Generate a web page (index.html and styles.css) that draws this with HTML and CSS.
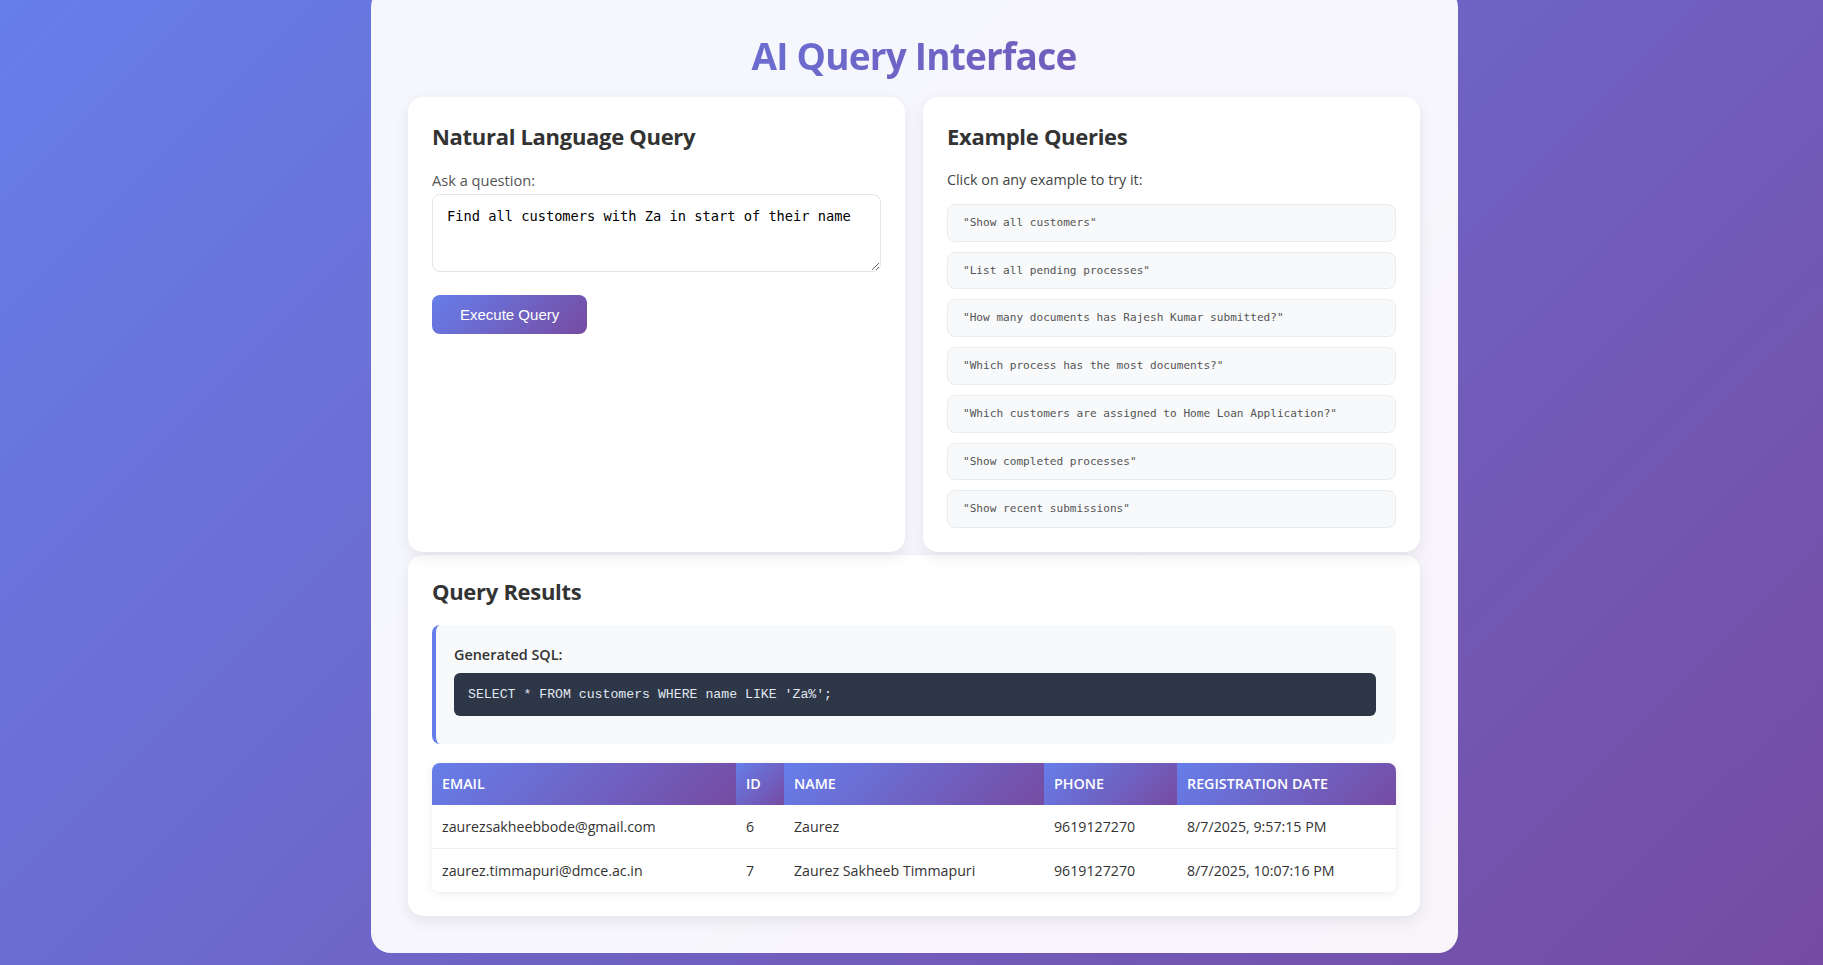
FILE: index.html
```html
<!DOCTYPE html>
<html lang="en">
<head>
<meta charset="utf-8">
<title>AI Query Interface</title>
<link rel="stylesheet" href="styles.css">
</head>
<body>
<div class="container">
  <h1 class="title">AI Query Interface</h1>
  <div class="top-grid">
    <section class="card">
      <h2 class="card-title">Natural Language Query</h2>
      <label class="field-label" for="q">Ask a question:</label>
      <textarea id="q" class="query-input">Find all customers with Za in start of their name</textarea>
      <button class="exec-btn" type="button">Execute Query</button>
    </section>
    <section class="card">
      <h2 class="card-title">Example Queries</h2>
      <p class="hint">Click on any example to try it:</p>
      <ul class="examples">
        <li class="example">"Show all customers"</li>
        <li class="example">"List all pending processes"</li>
        <li class="example">"How many documents has Rajesh Kumar submitted?"</li>
        <li class="example">"Which process has the most documents?"</li>
        <li class="example">"Which customers are assigned to Home Loan Application?"</li>
        <li class="example">"Show completed processes"</li>
        <li class="example">"Show recent submissions"</li>
      </ul>
    </section>
  </div>
  <section class="card results">
    <h2 class="card-title">Query Results</h2>
    <div class="sql-box">
      <div class="sql-label">Generated SQL:</div>
      <pre class="sql-code">SELECT * FROM customers WHERE name LIKE 'Za%';</pre>
    </div>
    <div class="table-wrap">
      <table class="results-table">
        <thead>
          <tr>
            <th class="c-email">Email</th>
            <th class="c-id">Id</th>
            <th class="c-name">Name</th>
            <th class="c-phone">Phone</th>
            <th class="c-date">Registration Date</th>
          </tr>
        </thead>
        <tbody>
          <tr>
            <td>zaurezsakheebbode@gmail.com</td>
            <td>6</td>
            <td>Zaurez</td>
            <td>9619127270</td>
            <td>8/7/2025, 9:57:15 PM</td>
          </tr>
          <tr>
            <td>zaurez.timmapuri@dmce.ac.in</td>
            <td>7</td>
            <td>Zaurez Sakheeb Timmapuri</td>
            <td>9619127270</td>
            <td>8/7/2025, 10:07:16 PM</td>
          </tr>
        </tbody>
      </table>
    </div>
  </section>
</div>
</body>
</html>
```

FILE: styles.css
```css
* { box-sizing: border-box; }

html { min-height: 100%; }

body {
  margin: 0;
  min-height: 100vh;
  padding: 0 0 13px 6px;
  font-family: "Open Sans", "Noto Sans", sans-serif;
  color: #333;
  background: linear-gradient(135deg, #667eea 0%, #764ba2 100%);
  background-attachment: fixed;
}

.container {
  width: 1087px;
  margin: -13px auto 0;
  padding: 37px 38px 37px 37px;
  background: rgba(255, 255, 255, 0.94);
  border-radius: 20px;
}

.title {
  margin: 8px 0 17px;
  font-size: 37px;
  line-height: 48px;
  font-weight: 700;
  text-align: center;
  letter-spacing: -0.8px;
  background: linear-gradient(135deg, #667eea 0%, #764ba2 100%);
  -webkit-background-clip: text;
  background-clip: text;
  color: transparent;
}

.top-grid {
  display: grid;
  grid-template-columns: 1fr 1fr;
  gap: 18px;
}

.card {
  background: #fff;
  border-radius: 15px;
  padding: 24px;
  box-shadow: 0 5px 15px rgba(0, 0, 0, 0.08);
}

.card-title {
  margin: 0 0 19px;
  font-size: 22px;
  line-height: 30px;
  font-weight: 700;
  color: #333;
  letter-spacing: -0.3px;
}

.field-label {
  display: block;
  margin-bottom: 4px;
  font-size: 14.6px;
  line-height: 20px;
  color: #555;
}

.query-input {
  display: block;
  width: 100%;
  height: 78px;
  padding: 13px 14px;
  border: 1px solid #e1e4e8;
  border-radius: 8px;
  font-family: "DejaVu Sans Mono", monospace;
  font-size: 13.7px;
  line-height: 16px;
  color: #000;
  resize: vertical;
  outline: none;
}

.exec-btn {
  margin-top: 23px;
  height: 39px;
  padding: 0 28px;
  border: none;
  border-radius: 8px;
  background: linear-gradient(135deg, #667eea 0%, #764ba2 100%);
  color: #fff;
  font-family: "Liberation Sans", Arial, sans-serif;
  font-size: 15px;
  cursor: pointer;
}

.hint {
  margin: 0 0 14px;
  font-size: 14.3px;
  line-height: 20px;
  color: #444;
}

.examples {
  list-style: none;
  margin: 0;
  padding: 0;
  display: flex;
  flex-direction: column;
  gap: 10px;
}

.example {
  padding: 11px 15px;
  background: #f8f9fa;
  border: 1px solid #e9ecef;
  border-radius: 8px;
  font-family: "DejaVu Sans Mono", monospace;
  font-size: 11.1px;
  line-height: 13.7px;
  color: #555;
  cursor: pointer;
}

.results {
  margin-top: 3px;
  padding-top: 21px;
}

.results .card-title {
  margin-bottom: 19px;
}

.sql-box {
  background: #f8f9fa;
  border-left: 4px solid #667eea;
  border-radius: 8px;
  padding: 20px 20px 28px 18px;
}

.sql-label {
  font-size: 14.4px;
  line-height: 20px;
  font-weight: 600;
  color: #333;
  margin-bottom: 8px;
}

.sql-code {
  margin: 0;
  padding: 14px 14px;
  background: #2d3748;
  color: #e2e8f0;
  border-radius: 6px;
  font-family: "Liberation Mono", "Courier New", monospace;
  font-size: 13.2px;
  line-height: 15px;
}

.table-wrap {
  margin-top: 19px;
  border-radius: 8px;
  overflow: hidden;
  box-shadow: 0 2px 10px rgba(0, 0, 0, 0.08);
}

.results-table {
  width: 100%;
  border-collapse: collapse;
}

.results-table th {
  padding: 12px 10px;
  text-align: left;
  font-size: 14.3px;
  line-height: 18px;
  font-weight: 600;
  text-transform: uppercase;
  color: #fff;
  background: linear-gradient(135deg, #667eea 0%, #764ba2 100%);
}

.results-table td {
  padding: 12px 10px;
  font-size: 14.2px;
  line-height: 19px;
  color: #333;
  border-bottom: 1px solid #eceef1;
  background: #fff;
}

.results-table tbody tr:last-child td { border-bottom: none; }

.c-email { width: 304px; }
.c-id { width: 48px; }
.c-name { width: 260px; }
.c-phone { width: 133px; }
.c-date { width: auto; }
```
